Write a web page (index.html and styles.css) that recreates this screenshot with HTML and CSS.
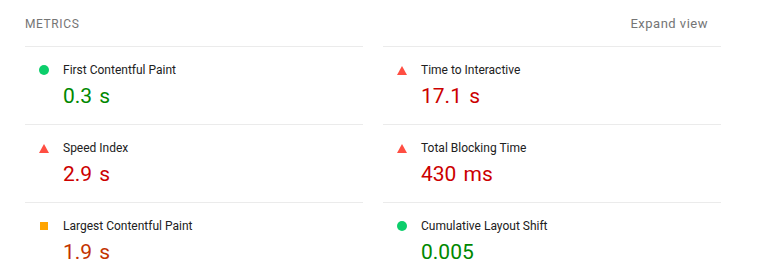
FILE: index.html
```html
<!DOCTYPE html>
<html lang="en">
  <head>
    <meta charset="utf-8" />
    <title>Metrics</title>
    <link rel="stylesheet" href="styles.css">
  </head>
  <body>
    <div class="metrics">
      <div class="metrics-header">
        <span class="metrics-title">Metrics</span>
        <span class="metrics-toggle">Expand view</span>
      </div>
      <div class="metrics-grid">
        <div class="metric pass">
          <span class="icon"></span>
          <span class="label">First Contentful Paint</span>
          <span class="value">0.3 s</span>
        </div>
        <div class="metric fail">
          <span class="icon"></span>
          <span class="label">Time to Interactive</span>
          <span class="value">17.1 s</span>
        </div>
        <div class="metric fail">
          <span class="icon"></span>
          <span class="label">Speed Index</span>
          <span class="value">2.9 s</span>
        </div>
        <div class="metric fail">
          <span class="icon"></span>
          <span class="label">Total Blocking Time</span>
          <span class="value">430 ms</span>
        </div>
        <div class="metric average">
          <span class="icon"></span>
          <span class="label">Largest Contentful Paint</span>
          <span class="value">1.9 s</span>
        </div>
        <div class="metric pass">
          <span class="icon"></span>
          <span class="label">Cumulative Layout Shift</span>
          <span class="value">0.005</span>
        </div>
      </div>
    </div>
  </body>
</html>
```

FILE: styles.css
```css
html {
  background: #fff;
}
body {
  margin: 0;
  font-family: Roboto, "Liberation Sans", Arial, sans-serif;
  color: #212121;
}

.metrics {
  width: 696px;
  padding: 10px 0 0 25px;
}

.metrics-header {
  display: flex;
  justify-content: space-between;
  align-items: center;
  height: 28px;
  padding-bottom: 8px;
  font-size: 12px;
  line-height: 16px;
  color: #757575;
}
.metrics-title {
  text-transform: uppercase;
  letter-spacing: 0.6px;
}
.metrics-toggle {
  margin-right: 13px;
  font-size: 13px;
  letter-spacing: 0.5px;
}

.metrics-grid {
  display: grid;
  grid-template-columns: 1fr 1fr;
  column-gap: 20px;
}

.metric {
  display: grid;
  grid-template-columns: 10px 1fr;
  column-gap: 14px;
  align-items: center;
  padding: 15px 0 15px 14px;
  border-top: 1px solid #ebebeb;
}
.label {
  font-size: 12px;
  line-height: 16px;
}
.value {
  grid-column: 2;
  margin-top: 5px;
  font-size: 21px;
  line-height: 26px;
  word-spacing: 2px;
}

.icon {
  display: block;
  justify-self: center;
}
.pass .icon {
  width: 10px;
  height: 10px;
  border-radius: 50%;
  background: #0cce6b;
}
.average .icon {
  width: 8px;
  height: 8px;
  background: #ffa400;
}
.fail .icon {
  width: 0;
  height: 0;
  border-left: 5px solid transparent;
  border-right: 5px solid transparent;
  border-bottom: 9px solid #ff4e42;
}

.pass .value { color: #008800; }
.average .value { color: #c33300; }
.fail .value { color: #cc0000; }
```
